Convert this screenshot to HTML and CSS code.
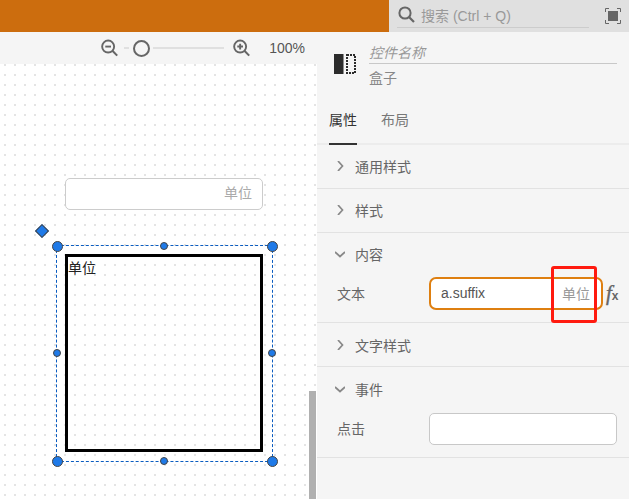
FILE: index.html
```html
<!DOCTYPE html>
<html lang="zh-CN">
<head>
    <meta charset="UTF-8">
    <meta name="viewport" content="width=device-width, initial-scale=1.0">
    <title>Editor</title>
    <link rel="stylesheet" href="styles.css">
</head>
<body>
    <header class="topbar">
        <div class="brand"></div>
        <div class="search-area">
            <div class="search">
                <svg class="search-icon" width="17" height="17" viewBox="0 0 17 17"><circle cx="7" cy="7" r="5.6" fill="none" stroke="#666" stroke-width="2"/><path d="M11 11l5 5" stroke="#666" stroke-width="2.2"/></svg>
                <span>搜索 (Ctrl + Q)</span>
            </div>
            <svg class="fullscreen" width="16" height="16" viewBox="0 0 16 16"><path d="M.5 4V.5H4M12 .5h3.5V4M15.5 12v3.5H12M4 15.5H.5V12" fill="none" stroke="#666"/><rect x="3" y="3" width="10" height="10" fill="#666"/></svg>
        </div>
    </header>

    <main class="workspace">
        <section class="left">
            <div class="zoombar">
                <svg width="18" height="18" viewBox="0 0 18 18"><circle cx="7.5" cy="7.5" r="6.3" fill="none" stroke="#666" stroke-width="2"/><path d="M4.5 7.5h6" stroke="#666" stroke-width="2"/><path d="M12 12l5 5" stroke="#666" stroke-width="2.2"/></svg>
                <div class="slider">
                    <i class="track-start"></i>
                    <i class="thumb"></i>
                    <i class="track-end"></i>
                </div>
                <svg width="18" height="18" viewBox="0 0 18 18"><circle cx="7.5" cy="7.5" r="6.3" fill="none" stroke="#666" stroke-width="2"/><path d="M4.5 7.5h6M7.5 4.5v6" stroke="#666" stroke-width="2"/><path d="M12 12l5 5" stroke="#666" stroke-width="2.2"/></svg>
                <span class="zoom-value">100%</span>
            </div>
            <div class="canvas">
                <div class="sample-input">单位</div>
                <div class="diamond"></div>
                <div class="selection"></div>
                <div class="box">单位</div>
                <i class="handle big h-tl"></i>
                <i class="handle big h-tr"></i>
                <i class="handle big h-bl"></i>
                <i class="handle big h-br"></i>
                <i class="handle h-tm"></i>
                <i class="handle h-bm"></i>
                <i class="handle h-ml"></i>
                <i class="handle h-mr"></i>
                <div class="scrollbar"></div>
            </div>
        </section>

        <aside class="panel">
            <div class="widget-head">
                <svg class="widget-icon" width="24" height="22" viewBox="0 0 24 22"><rect x="0" y="1" width="9.5" height="20" fill="#2b2b2b"/><rect x="13" y="2" width="8" height="18" fill="none" stroke="#2b2b2b" stroke-width="2" stroke-dasharray="2 1"/></svg>
                <div class="widget-info">
                    <div class="widget-name">控件名称</div>
                    <div class="widget-type">盒子</div>
                </div>
            </div>
            <nav class="tabs">
                <span class="tab active">属性</span>
                <span class="tab">布局</span>
            </nav>

            <div class="group">
                <div class="group-title"><svg class="chev" width="10" height="10" viewBox="0 0 10 10"><path d="M3 0l4.5 5L3 10" fill="none" stroke="#888" stroke-width="1.7"/></svg>通用样式</div>
            </div>
            <div class="group">
                <div class="group-title"><svg class="chev" width="10" height="10" viewBox="0 0 10 10"><path d="M3 0l4.5 5L3 10" fill="none" stroke="#888" stroke-width="1.7"/></svg>样式</div>
            </div>
            <div class="group open">
                <div class="group-title"><svg class="chev" width="10" height="10" viewBox="0 0 10 10"><path d="M0 3l5 4.5L10 3" fill="none" stroke="#888" stroke-width="1.7"/></svg>内容</div>
                <div class="field tall">
                    <label>文本</label>
                    <div class="value focus">
                        <span>a.suffix</span>
                        <span class="suffix">单位</span>
                    </div>
                    <span class="fx"><em>f</em><b>x</b></span>
                </div>
                <div class="callout"></div>
            </div>
            <div class="group low">
                <div class="group-title"><svg class="chev" width="10" height="10" viewBox="0 0 10 10"><path d="M3 0l4.5 5L3 10" fill="none" stroke="#888" stroke-width="1.7"/></svg>文字样式</div>
            </div>
            <div class="group open low">
                <div class="group-title"><svg class="chev" width="10" height="10" viewBox="0 0 10 10"><path d="M0 3l5 4.5L10 3" fill="none" stroke="#888" stroke-width="1.7"/></svg>事件</div>
                <div class="field spaced">
                    <label>点击</label>
                    <div class="value wide"></div>
                </div>
            </div>
        </aside>
    </main>
</body>
</html>
```

FILE: styles.css
```css
* {
    box-sizing: border-box;
}

html,
body {
    margin: 0;
    height: 100%;
    overflow: hidden;
}

body {
    display: flex;
    flex-direction: column;
    font-family: "Liberation Sans", "Noto Sans CJK SC", sans-serif;
    font-size: 14px;
    color: #666;
    background: #f5f5f5;
}

.topbar {
    display: flex;
    height: 32px;
    flex: none;
}

.brand {
    width: 389px;
    background: #cc6d0e;
}

.search-area {
    flex: 1;
    display: flex;
    padding: 0 8px;
    background: #e0e0e0;
}

.search {
    width: 192px;
    height: 28px;
    display: flex;
    align-items: center;
    gap: 6px;
    padding: 2px 0 0 1px;
    border-bottom: 1px solid #ccc;
    color: #999;
}

.fullscreen {
    margin: 8px 0 0 16px;
}

.workspace {
    flex: 1;
    display: flex;
    min-height: 0;
}

.left {
    width: 317px;
    display: flex;
    flex-direction: column;
}

.zoombar {
    height: 32px;
    flex: none;
    display: flex;
    align-items: center;
    padding: 0 12px 0 101px;
}

.slider {
    width: 108px;
    margin: 0 6px;
    display: flex;
    align-items: center;
}

.slider i {
    display: block;
}

.track-start {
    width: 5px;
    height: 2px;
    background: #e0e0e0;
}

.thumb {
    width: 17px;
    height: 17px;
    margin: 0 3px 0 4px;
    border: 2px solid #666;
    border-radius: 50%;
}

.track-end {
    width: 71px;
    height: 2px;
    background: #e0e0e0;
}

.zoom-value {
    margin-left: 19px;
    color: #555;
}

.canvas {
    flex: 1;
    position: relative;
    background-color: #fff;
    background-image: radial-gradient(circle at 1px 1px, #e4e4e4 1px, transparent 1.1px);
    background-size: 10px 10px;
    background-position: 4px 0;
}

.sample-input {
    position: absolute;
    left: 65px;
    top: 114px;
    width: 198px;
    height: 32px;
    padding-right: 10px;
    line-height: 29px;
    text-align: right;
    color: #aaa;
    background: #fff;
    border: 1px solid #ccc;
    border-radius: 5px;
}

.diamond {
    position: absolute;
    left: 37px;
    top: 162px;
    width: 10px;
    height: 10px;
    transform: rotate(45deg);
    background: #1f7ae8;
    border: 1px solid #444;
}

.selection {
    position: absolute;
    left: 56px;
    top: 181px;
    width: 217px;
    height: 217px;
    border: 1px dashed #0a5cc0;
}

.box {
    position: absolute;
    left: 65px;
    top: 190px;
    width: 198px;
    height: 198px;
    border: 3px solid #000;
    color: #222;
    line-height: 22px;
}

.handle {
    position: absolute;
    width: 8px;
    height: 8px;
    margin: -4px 0 0 -4px;
    background: #1f7ae8;
    border: 1px solid #444;
    border-radius: 50%;
}

.handle.big {
    width: 11px;
    height: 11px;
    margin: -5.5px 0 0 -5.5px;
}

.h-tl { left: 57px; top: 182px; }
.h-tr { left: 272px; top: 182px; }
.h-bl { left: 57px; top: 397px; }
.h-br { left: 272px; top: 397px; }
.h-tm { left: 164px; top: 182px; }
.h-bm { left: 164px; top: 397px; }
.h-ml { left: 57px; top: 289px; }
.h-mr { left: 272px; top: 289px; }

.scrollbar {
    position: absolute;
    right: 1px;
    bottom: 0;
    width: 7px;
    height: 108px;
    background: #b0b0b0;
}

.panel {
    flex: 1;
    min-width: 0;
    display: flex;
    flex-direction: column;
}

.widget-head {
    height: 68px;
    flex: none;
    display: flex;
    padding: 21px 12px 0 17px;
}

.widget-icon {
    flex: none;
    margin-right: 11px;
}

.widget-info {
    flex: 1;
    margin-top: -11px;
}

.widget-name {
    height: 22px;
    line-height: 22px;
    font-style: italic;
    color: #999;
    border-bottom: 1px solid #c8c8c8;
}

.widget-type {
    margin-top: 4px;
    line-height: 20px;
    color: #888;
}

.tabs {
    height: 45px;
    flex: none;
    display: flex;
    gap: 24px;
    padding-left: 12px;
    border-bottom: 2px solid #ececec;
}

.tab {
    height: 45px;
    line-height: 40px;
    color: #777;
}

.tab.active {
    color: #333;
    border-bottom: 2px solid #333;
}

.group {
    position: relative;
    flex: none;
    border-bottom: 1px solid #e2e2e2;
}

.group.open {
    padding-bottom: 12px;
}

.group-title {
    height: 43px;
    display: flex;
    align-items: center;
    padding: 0 0 2px 18px;
    color: #666;
}

.group.low .group-title {
    padding-bottom: 0;
}

.chev {
    margin-right: 10px;
    flex: none;
}

.field {
    display: flex;
    align-items: center;
    height: 32px;
    margin-top: 1px;
    padding-left: 20px;
}

.field.tall {
    height: 33px;
}

.field.spaced {
    margin-top: 3px;
}

.field label {
    width: 92px;
    flex: none;
    padding-bottom: 2px;
}

.value {
    height: 32px;
    background: #fff;
    border: 1px solid #c8c8c8;
    border-radius: 5px;
}

.value.focus {
    width: 174px;
    height: 33px;
    display: flex;
    align-items: center;
    justify-content: space-between;
    padding: 0 11px 2px 10px;
    color: #555;
    border: 2px solid #de7f10;
    border-radius: 7px;
}

.value.wide {
    width: 188px;
}

.suffix {
    color: #999;
}

.fx {
    margin-left: 3px;
    color: #666;
    font-family: "Liberation Serif", serif;
    font-size: 21px;
    line-height: 1;
    -webkit-text-stroke: 0.4px #666;
}

.fx b {
    font-family: "Liberation Sans", sans-serif;
    font-size: 12px;
    -webkit-text-stroke: 0;
}

.callout {
    position: absolute;
    left: 234px;
    top: 33px;
    width: 46px;
    height: 57px;
    border: 3px solid #ff1a0f;
    border-radius: 3px;
}
```
